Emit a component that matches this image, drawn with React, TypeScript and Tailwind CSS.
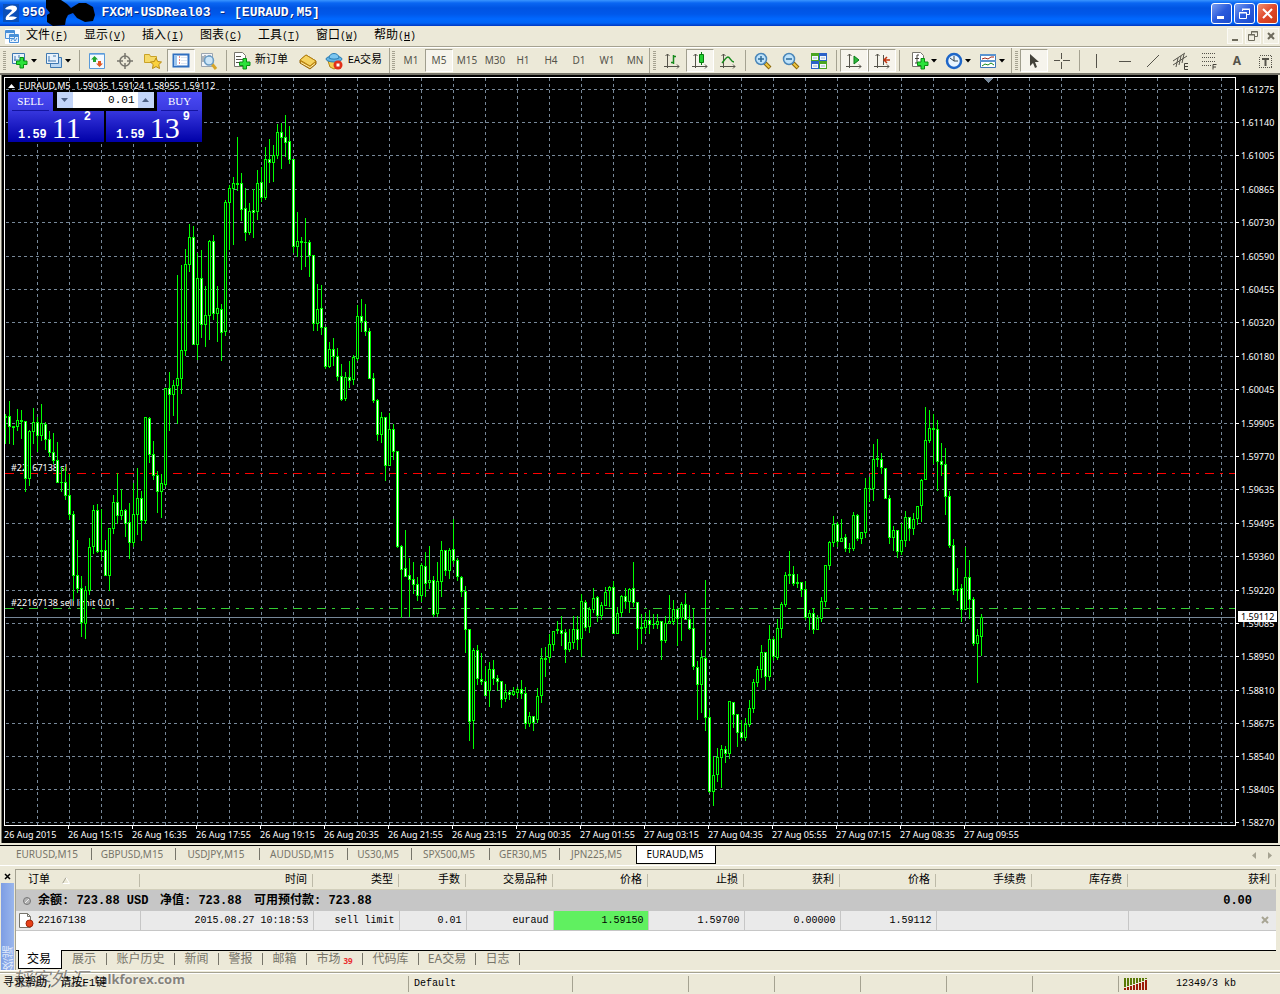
import type { ReactNode } from "react";

// high, body top, body bottom, low, falling
const candles = [
  [414, 416, 417, 443, 0], [401, 416, 426, 443, 1], [426, 426, 427, 444, 0], [409, 420, 426, 430, 0],
  [410, 420, 421, 438, 0], [421, 421, 478, 491, 1], [430, 431, 478, 485, 0], [408, 422, 431, 443, 0],
  [417, 422, 435, 451, 1], [404, 423, 435, 440, 0], [422, 424, 439, 449, 1], [431, 439, 452, 456, 1],
  [433, 452, 460, 463, 1], [442, 460, 482, 482, 1], [467, 482, 482, 491, 0], [467, 482, 495, 499, 1],
  [474, 495, 514, 519, 1], [511, 514, 575, 600, 1], [540, 575, 588, 592, 1], [576, 588, 622, 636, 1],
  [586, 590, 623, 638, 0], [538, 547, 590, 594, 0], [505, 510, 546, 553, 0], [504, 510, 551, 552, 1],
  [509, 550, 551, 559, 0], [540, 550, 575, 575, 1], [528, 528, 575, 590, 0], [495, 502, 528, 533, 0],
  [473, 502, 515, 523, 1], [489, 510, 515, 519, 0], [509, 510, 523, 536, 1], [503, 522, 542, 558, 1],
  [483, 514, 542, 546, 0], [468, 498, 514, 534, 0], [491, 498, 520, 540, 1], [417, 417, 520, 523, 0],
  [417, 418, 454, 462, 1], [441, 454, 475, 479, 1], [471, 475, 491, 512, 1], [474, 483, 491, 517, 0],
  [388, 388, 484, 486, 0], [372, 388, 394, 430, 1], [380, 385, 394, 415, 0], [275, 378, 385, 423, 0],
  [265, 350, 378, 393, 0], [249, 264, 350, 355, 0], [224, 237, 264, 271, 0], [226, 237, 344, 344, 1],
  [253, 278, 344, 359, 0], [250, 278, 324, 337, 1], [286, 315, 324, 346, 0], [240, 241, 315, 339, 0],
  [235, 241, 313, 319, 1], [286, 308, 313, 341, 0], [304, 309, 332, 360, 1], [200, 202, 331, 335, 0],
  [185, 188, 202, 249, 0], [177, 183, 188, 244, 0], [137, 183, 184, 190, 0], [173, 183, 209, 220, 1],
  [188, 208, 232, 240, 1], [203, 211, 232, 234, 0], [189, 210, 212, 237, 1], [170, 183, 211, 219, 0],
  [167, 182, 197, 201, 1], [147, 159, 197, 199, 0], [139, 159, 162, 182, 1], [145, 155, 162, 181, 0],
  [124, 132, 155, 158, 0], [123, 132, 137, 168, 1], [115, 137, 142, 156, 1], [126, 141, 159, 163, 1],
  [159, 159, 246, 252, 1], [212, 241, 246, 256, 0], [237, 241, 242, 269, 0], [218, 242, 242, 266, 0],
  [240, 242, 255, 276, 1], [255, 255, 323, 330, 1], [284, 309, 323, 330, 0], [285, 308, 327, 334, 1],
  [327, 327, 366, 368, 1], [342, 349, 366, 367, 0], [338, 349, 356, 365, 1], [348, 356, 376, 380, 1],
  [364, 376, 399, 400, 1], [372, 377, 398, 400, 0], [361, 377, 380, 387, 1], [355, 357, 379, 384, 0],
  [305, 316, 358, 360, 0], [299, 316, 321, 331, 1], [304, 321, 331, 335, 1], [328, 331, 378, 378, 1],
  [373, 378, 400, 402, 1], [399, 400, 434, 440, 1], [412, 417, 434, 442, 0], [417, 417, 465, 480, 1],
  [413, 429, 465, 465, 0], [424, 429, 451, 459, 1], [451, 451, 546, 547, 1], [545, 546, 569, 617, 1],
  [530, 568, 576, 576, 1], [558, 575, 579, 616, 1], [562, 579, 584, 593, 1], [577, 584, 595, 600, 1],
  [563, 565, 595, 601, 0], [552, 566, 583, 596, 1], [546, 580, 582, 588, 0], [576, 580, 614, 616, 1],
  [562, 581, 613, 616, 0], [541, 550, 581, 596, 0], [550, 550, 570, 575, 1], [548, 550, 570, 578, 0],
  [519, 549, 560, 563, 1], [558, 560, 576, 580, 1], [576, 577, 591, 596, 1], [586, 591, 629, 652, 1],
  [629, 629, 721, 740, 1], [648, 650, 720, 748, 0], [645, 650, 678, 684, 1], [653, 679, 681, 684, 1],
  [666, 681, 695, 695, 1], [662, 669, 690, 706, 0], [660, 669, 678, 684, 1], [675, 678, 681, 690, 1],
  [681, 681, 699, 707, 1], [684, 692, 698, 701, 0], [690, 692, 694, 699, 1], [687, 691, 694, 695, 0],
  [687, 689, 692, 697, 0], [680, 689, 693, 698, 1], [687, 693, 723, 728, 1], [712, 716, 723, 726, 0],
  [716, 716, 722, 730, 1], [688, 696, 719, 722, 0], [648, 658, 695, 702, 0], [647, 658, 659, 676, 0],
  [634, 644, 657, 662, 0], [631, 631, 644, 650, 0], [621, 629, 630, 633, 0], [616, 630, 633, 645, 1],
  [629, 632, 649, 662, 1], [629, 642, 649, 651, 0], [616, 629, 642, 648, 0], [616, 629, 639, 649, 1],
  [594, 601, 638, 656, 0], [600, 602, 627, 630, 1], [607, 609, 626, 632, 0], [588, 598, 609, 612, 0],
  [596, 597, 615, 621, 1], [602, 605, 615, 619, 0], [587, 592, 605, 605, 0], [586, 587, 590, 606, 0],
  [581, 587, 633, 633, 1], [607, 613, 633, 633, 0], [595, 596, 612, 616, 0], [588, 596, 601, 608, 1],
  [588, 589, 601, 612, 0], [562, 588, 602, 606, 1], [602, 602, 628, 649, 1], [614, 627, 628, 643, 0],
  [613, 620, 627, 633, 0], [610, 620, 624, 633, 1], [614, 624, 624, 628, 0], [614, 621, 624, 628, 0],
  [621, 621, 640, 659, 1], [616, 623, 640, 642, 0], [595, 621, 623, 623, 0], [600, 609, 621, 624, 0],
  [609, 609, 618, 645, 1], [602, 604, 617, 640, 0], [593, 604, 619, 619, 1], [605, 619, 628, 629, 1],
  [609, 628, 666, 669, 1], [661, 667, 684, 719, 1], [650, 657, 684, 712, 0], [580, 658, 717, 730, 1],
  [710, 717, 791, 792, 1], [756, 775, 791, 805, 0], [748, 757, 774, 781, 0], [745, 749, 757, 787, 0],
  [746, 749, 753, 762, 1], [701, 701, 753, 758, 0], [702, 702, 714, 727, 1], [714, 714, 732, 746, 1],
  [720, 732, 737, 738, 1], [718, 724, 737, 740, 0], [700, 708, 724, 726, 0], [679, 682, 708, 712, 0],
  [666, 669, 682, 686, 0], [645, 652, 669, 677, 0], [652, 652, 676, 689, 1], [625, 639, 676, 680, 0],
  [637, 639, 656, 660, 1], [619, 628, 657, 659, 0], [602, 604, 628, 637, 0], [572, 575, 604, 606, 0],
  [551, 574, 575, 583, 0], [566, 574, 583, 585, 1], [574, 582, 583, 587, 0], [582, 582, 589, 596, 1],
  [581, 589, 617, 619, 1], [610, 613, 617, 629, 0], [608, 613, 629, 633, 1], [615, 618, 629, 629, 0],
  [597, 601, 618, 621, 0], [565, 565, 601, 606, 0], [541, 542, 565, 569, 0], [516, 524, 542, 546, 0],
  [522, 524, 541, 546, 1], [519, 538, 541, 541, 0], [534, 537, 548, 551, 1], [543, 548, 548, 552, 0],
  [512, 515, 548, 550, 0], [514, 515, 538, 540, 1], [532, 532, 538, 543, 0], [478, 488, 532, 537, 0],
  [477, 488, 488, 501, 0], [444, 459, 488, 500, 0], [439, 458, 459, 466, 0], [453, 459, 467, 473, 1],
  [468, 468, 498, 498, 1], [495, 498, 537, 543, 1], [526, 530, 537, 550, 0], [530, 530, 551, 557, 1],
  [523, 540, 551, 554, 0], [511, 517, 540, 546, 0], [517, 517, 528, 540, 1], [513, 519, 528, 534, 0],
  [506, 506, 518, 524, 0], [479, 480, 505, 521, 0], [407, 440, 479, 479, 0], [410, 428, 440, 442, 0],
  [414, 428, 429, 463, 0], [420, 429, 461, 490, 1], [443, 461, 464, 475, 1], [448, 464, 496, 514, 1],
  [491, 496, 545, 547, 1], [539, 545, 590, 594, 1], [568, 589, 590, 600, 0], [584, 588, 609, 621, 1],
  [547, 577, 609, 609, 0], [560, 577, 599, 618, 1], [597, 599, 643, 645, 1], [629, 635, 643, 682, 0],
  [614, 617, 636, 655, 0],
];

const prices: [number, string][] = [
  [89, "1.61275"], [122, "1.61140"], [155, "1.61005"], [189, "1.60865"], [222, "1.60730"], [256, "1.60590"],
  [289, "1.60455"], [322, "1.60320"], [356, "1.60180"], [389, "1.60045"], [423, "1.59905"], [456, "1.59770"],
  [489, "1.59635"], [523, "1.59495"], [556, "1.59360"], [590, "1.59220"], [623, "1.59085"], [656, "1.58950"],
  [690, "1.58810"], [723, "1.58675"], [756, "1.58540"], [789, "1.58405"], [822, "1.58270"],
];

const times = [
  "26 Aug 2015", "26 Aug 15:15", "26 Aug 16:35", "26 Aug 17:55", "26 Aug 19:15", "26 Aug 20:35", "26 Aug 21:55", "26 Aug 23:15",
  "27 Aug 00:35", "27 Aug 01:55", "27 Aug 03:15", "27 Aug 04:35", "27 Aug 05:55", "27 Aug 07:15", "27 Aug 08:35", "27 Aug 09:55",
];

const menus = [["文件", "F"], ["显示", "V"], ["插入", "I"], ["图表", "C"], ["工具", "T"], ["窗口", "W"], ["帮助", "H"]];

const periods = ["M1", "M5", "M15", "M30", "H1", "H4", "D1", "W1", "MN"];

const symbols = [
  ["EURUSD,M15", "w-[86px]"], ["GBPUSD,M15", "w-[84px]"], ["USDJPY,M15", "w-[84px]"], ["AUDUSD,M15", "w-[88px]"],
  ["US30,M5", "w-16"], ["SPX500,M5", "w-[78px]"], ["GER30,M5", "w-[70px]"], ["JPN225,M5", "w-[76px]"],
];

const columns = [
  ["时间", "w-[173px]"], ["类型", "w-[86px]"], ["手数", "w-[67px]"], ["交易品种", "w-[87px]"], ["价格", "w-[95px]"],
  ["止损", "w-[96px]"], ["获利", "w-[96px]"], ["价格", "w-[96px]"], ["手续费", "w-[96px]"], ["库存费", "w-[96px]"],
];

const panels = [
  ["展示", "w-[45px]"], ["账户历史", "w-[68px]"], ["新闻", "w-[44px]"], ["警报", "w-[44px]"], ["邮箱", "w-[44px]"],
  ["市场", "w-[56px]"], ["代码库", "w-[56px]"], ["EA交易", "w-[57px]"], ["日志", "w-[44px]"],
];

function Icon({ w = 18, h = 18, children }: { w?: number; h?: number; children: ReactNode }) {
  return (
    <svg width={w} height={h} viewBox={`0 0 ${w} ${h}`} className="block shrink-0" fill="none">
      {children}
    </svg>
  );
}

function Plus({ x, y }: { x: number; y: number }) {
  return (
    <path
      transform={`translate(${x} ${y})`}
      d="M4 .5h3.500v3.500h3.500v3.500h-3.500v3.500h-3.500v-3.500h-3.500v-3.500h3.500z"
      fill="#2be23a"
      stroke="#0a8f12"
    />
  );
}

function Tool({ label, pressed, children }: { label: string; pressed?: boolean; children: ReactNode }) {
  return (
    <button
      aria-label={label}
      className={`flex h-[23px] w-7 shrink-0 items-center justify-center ${
        pressed ? "border border-t-[#a09e8e] border-l-[#a09e8e] border-r-white border-b-white bg-[#f6f4ec]" : ""
      }`}
    >
      {children}
    </button>
  );
}

function DropTool({ label, children }: { label: string; children: ReactNode }) {
  return (
    <button aria-label={label} className="flex h-[23px] w-[34px] shrink-0 items-center gap-[2px] pl-[3px]">
      {children}
      <Icon w={6} h={4}>
        <path d="M0 0h6l-3 3.500z" fill="#000" />
      </Icon>
    </button>
  );
}

function Grip() {
  return <div className="mx-[2px] h-[19px] w-[3px] shrink-0 bg-[repeating-linear-gradient(#a5a291_0_1px,#ece9d8_1px_2px)]" />;
}

function Sep() {
  return <div className="mx-[3px] h-[21px] w-px shrink-0 bg-[#a5a291]" />;
}

function Magnifier({ plus }: { plus?: boolean }) {
  return (
    <Icon>
      <path d="M11 11l5 5" stroke="#8a6508" strokeWidth="4" />
      <path d="M11.500 11.500l4 4" stroke="#f0c840" strokeWidth="2" />
      <circle cx="7" cy="7" r="5.500" fill="#bfe3fa" stroke="#4a86b8" strokeWidth="1.500" />
      <path d="M4 7h6" stroke="#2c6a98" strokeWidth="1.500" />
      {plus && <path d="M7 4v6" stroke="#2c6a98" strokeWidth="1.500" />}
    </Icon>
  );
}

function TitleBar() {
  return (
    <header className="flex h-[26px] items-center bg-[linear-gradient(#3a95ff_0,#0a66f2_3px,#0054e3_8px,#0058ea_14px,#0068ff_19px,#0064f6_23px,#0036c0_26px)] pl-[3px] pr-[2px]">
      <Icon w={16} h={20}>
        <path d="M0 1h16v18H0z" fill="#0b4fb8" />
        <path d="M2 6c2-4 11-5 12-1 .5 4-7 6-8 9 3-1 6 0 8 0-2 4-8 3-11 3-2-4 5-7 6-10-2-1-4 0-7-1z" fill="#fff" />
      </Icon>
      <h1 className="flex items-center font-['Liberation_Mono'] text-[13px] font-bold whitespace-pre text-white [text-shadow:1px_1px_#0a2a80]">
        <span className="ml-[3px]">950</span>
        <Icon w={50} h={26}>
          <path d="M1 0h15l6 4 4 4 8-5h7l7 4 2 8-2 6-8 1-8-4-4-5-5 2-2 4-1 6-12 1-6-4V15l3-2-4-5z" fill="#000" />
        </Icon>
        <span className="ml-[6px]">FXCM-USDReal03 - [EURAUD,M5]</span>
      </h1>
      <div className="ml-auto flex gap-[2px]">
        <button aria-label="最小化" className="flex size-[21px] items-center justify-center rounded-[3px] border border-white bg-[linear-gradient(135deg,#7b9ef0,#2a5bdc_50%,#1b4ccc)]">
          <Icon w={13} h={13}><path d="M2 9h7v3H2z" fill="#fff" /></Icon>
        </button>
        <button aria-label="还原" className="flex size-[21px] items-center justify-center rounded-[3px] border border-white bg-[linear-gradient(135deg,#7b9ef0,#2a5bdc_50%,#1b4ccc)]">
          <Icon w={13} h={13}>
            <path d="M4.500 4V2.500h7v5H9M4 2h8M1.500 5.500h7v6h-7zM1 6h8" stroke="#fff" />
          </Icon>
        </button>
        <button aria-label="关闭" className="flex size-[21px] items-center justify-center rounded-[3px] border border-white bg-[linear-gradient(135deg,#f09070,#e0482a_50%,#c83a18)]">
          <Icon w={13} h={13}><path d="M2 2l9 9M11 2l-9 9" stroke="#fff" strokeWidth="2" /></Icon>
        </button>
      </div>
    </header>
  );
}

function MenuBar() {
  return (
    <div className="flex h-5 items-center pl-[5px] pr-px">
      <Icon w={15} h={15}>
        <path d="M0 0h15v15H0z" fill="#fff" />
        <path d="M.5 1.500h9v8h-9zM4.500 5.500h9v8h-9z" fill="#e8f2fc" stroke="#4a90d8" />
        <path d="M1 3h8M5 7h8" stroke="#4a90d8" strokeWidth="2" />
        <path d="M6 12l2-3 2 3 2-3" stroke="#4a90d8" />
      </Icon>
      <nav className="ml-[6px] flex">
        {menus.map(([name, key]) => (
          <button key={key} className="flex w-[58px] items-center font-['Liberation_Mono','Noto_Sans_CJK_SC',monospace] text-[12px]">
            {name}
            <span className="text-[10px]">
              (<u>{key}</u>)
            </span>
          </button>
        ))}
      </nav>
      <div className="ml-auto flex gap-[2px]">
        <button aria-label="最小化图表" className="flex size-4 items-center justify-center border border-[#fbfaf5] bg-[#f1efe3]">
          <Icon w={12} h={12}><path d="M3 9h6v2H3z" fill="#6d6a5c" /></Icon>
        </button>
        <button aria-label="还原图表" className="flex size-4 items-center justify-center border border-[#fbfaf5] bg-[#f1efe3]">
          <Icon w={12} h={12}><path d="M4.500 4V1.500h6v5H8M4 2h7M1.500 4.500h6v6h-6zM1 5h7" stroke="#6d6a5c" /></Icon>
        </button>
        <button aria-label="关闭图表" className="flex size-4 items-center justify-center border border-[#fbfaf5] bg-[#f1efe3]">
          <Icon w={12} h={12}><path d="M3 3l6 6M9 3l-6 6" stroke="#6d6a5c" strokeWidth="2" /></Icon>
        </button>
      </div>
    </div>
  );
}

function Toolbar() {
  const axis = <path d="M4.500 2v14M1 14.500h15M2.500 4l2-2 2 2M14 12.500l2 2-2 2" stroke="#55534a" />;
  return (
    <div className="flex h-[27px] items-center border-t border-[#a5a291] pt-px font-['Liberation_Mono','Noto_Sans_CJK_SC',monospace] text-[11px] shadow-[inset_0_1px_#fff]">
      <div className="flex h-full w-[390px] shrink-0 items-center border-r border-[#a5a291] pl-px">
        <Grip />
        <DropTool label="新图表">
          <Icon>
            <path d="M1.500 1.500h12v10h-12z" fill="#e8f2fc" stroke="#3f78b0" />
            <path d="M4 4v5M3 8h8M8 3v3" stroke="#3f78b0" />
            <Plus x={5} y={5} />
          </Icon>
        </DropTool>
        <DropTool label="配置文件">
          <Icon>
            <path d="M5.500 5.500h11v10h-11z" fill="#b9d7f2" stroke="#3f78b0" />
            <path d="M1.500 1.500h12v10h-12z" fill="#e8f2fc" stroke="#3f78b0" />
            <path d="M4 4v5M3 9h8M8 4h3" stroke="#3f78b0" />
          </Icon>
        </DropTool>
        <Sep />
        <Tool label="市场报价">
          <Icon>
            <path d="M1.500 1.500h15v15h-15z" fill="#f4f9ff" stroke="#5a9ad8" />
            <path d="M2 2h14v1H2z" fill="#8fbcea" />
            <path d="M6.500 4l3.500 3.500H8V10H5V7.500H3z" fill="#1fa52c" />
            <path d="M11.500 15L8 11.500h2V9h3v2.500h2z" fill="#e25822" />
          </Icon>
        </Tool>
        <Tool label="数据窗口">
          <Icon>
            <circle cx="9" cy="9" r="5" stroke="#77756c" strokeWidth="1.500" />
            <path d="M9 1v6M9 11v6M1 9h6M11 9h6" stroke="#77756c" strokeWidth="1.500" />
          </Icon>
        </Tool>
        <Tool label="导航">
          <Icon>
            <path d="M.5 2.500h5l1 2h6v6h-12z" fill="#f6da68" stroke="#c9a227" />
            <path d="M12 6l1.700 3.500 3.800.5-2.700 2.600.7 3.900-3.500-1.900-3.500 1.900.7-3.900L6.500 10l3.800-.5z" fill="#fbd23c" stroke="#b98a10" />
          </Icon>
        </Tool>
        <Tool label="终端" pressed>
          <Icon>
            <path d="M1.500 2.500h15v12h-15z" fill="#fff" stroke="#2f6fc0" strokeWidth="2" />
            <path d="M2 3h3v11H2z" fill="#9cc4ee" />
            <path d="M7 5h1M7 8h1M7 11h1" stroke="#d02020" />
            <path d="M9 5.500h6M9 8.500h6M9 11.500h6" stroke="#dde6f2" />
          </Icon>
        </Tool>
        <Tool label="策略测试">
          <Icon>
            <path d="M1.500 1.500h11v13h-11z" fill="#f1f4f8" stroke="#9aa5b0" />
            <path d="M3 4v6M5 3v5M8 4h3" stroke="#66727c" />
            <path d="M12 12l4 5" stroke="#d6a528" strokeWidth="3" />
            <circle cx="9" cy="8.500" r="4.500" fill="#c4e2f8" fillOpacity=".85" stroke="#6a9cc4" strokeWidth="1.500" />
          </Icon>
        </Tool>
        <Sep />
        <button className="flex h-[23px] w-16 shrink-0 items-center gap-[4px] pl-[3px] whitespace-nowrap">
          <Icon>
            <path d="M1.500.5h8l3 3v11h-11z" fill="#fff" stroke="#77756c" />
            <path d="M3 4.500h5M3 7.500h7M3 10.500h4" stroke="#55534a" />
            <Plus x={6} y={6} />
          </Icon>
          新订单
        </button>
        <Tool label="语言编辑器">
          <Icon>
            <path d="M1 8l6-5 10 6v3l-6 5L1 11z" fill="#c98e18" stroke="#99690c" />
            <path d="M1 8l6-5 10 6-6 5z" fill="#f6d360" stroke="#b58212" />
            <path d="M2 10.500l9 5 5-4" stroke="#fff1b0" />
          </Icon>
        </Tool>
        <button className="flex h-[23px] shrink-0 items-center gap-[5px] pl-[3px] whitespace-nowrap">
          <Icon>
            <path d="M3 9h12l-2 6-4 2-4-2z" fill="#f4cf50" stroke="#b38616" />
            <ellipse cx="9" cy="7" rx="8" ry="3" fill="#62b4e4" stroke="#2b7db4" />
            <path d="M4 6c0-6 10-6 10 0-2 1.500-8 1.500-10 0z" fill="#7cc6f0" stroke="#2b7db4" />
            <circle cx="13" cy="13" r="4.500" fill="#e23018" />
            <path d="M11.500 11.500h3v3h-3z" fill="#fff" />
          </Icon>
          <span><span className="text-[10px]">EA</span>交易</span>
        </button>
      </div>
      <div className="flex h-full w-[260px] shrink-0 items-center border-r border-[#a5a291] font-['Noto_Sans'] text-[10px] text-[#55534a]">
        <Grip />
        {periods.map((p) => (
          <Tool key={p} label={p} pressed={p === "M5"}>{p}</Tool>
        ))}
      </div>
      <div className="flex h-full w-[362px] shrink-0 items-center border-r border-[#a5a291] pl-px">
        <Grip />
        <Tool label="柱状图"><Icon>{axis}<path d="M10.500 3v9M8 10.500h3M10 4.500h3" stroke="#168a1c" strokeWidth="1.500" /></Icon></Tool>
        <Tool label="蜡烛图" pressed><Icon>{axis}<path d="M10.500 0v13" stroke="#087c10" /><path d="M8.500 2.500h4v8h-4z" fill="#22d032" stroke="#087c10" /></Icon></Tool>
        <Tool label="折线图"><Icon>{axis}<path d="M3 11c2-2 4-6 6-6s3 5 6 5" stroke="#168a1c" strokeWidth="1.500" /></Icon></Tool>
        <Sep />
        <Tool label="放大"><Magnifier plus /></Tool>
        <Tool label="缩小"><Magnifier /></Tool>
        <Tool label="平铺窗口">
          <Icon>
            <path d="M1 1h8v8H1zM9 9h8v8H9z" fill="#49a522" />
            <path d="M9 1h8v8H9zM1 9h8v8H1z" fill="#2c62c8" />
            <path d="M2 4h6v4H2zM10 4h6v4h-6zM2 12h6v4H2zM10 12h6v4h-6z" fill="#f4f8fc" />
            <path d="M3 6h4M11 6h4M3 14h4M11 14h4" stroke="#9cb4cc" />
          </Icon>
        </Tool>
        <Sep />
        <Tool label="自动滚动" pressed><Icon>{axis}<path d="M9 4v8l5-4z" fill="#2bb83a" stroke="#0a7a16" /></Icon></Tool>
        <Tool label="图表平移" pressed><Icon>{axis}<path d="M10.500 3v10" stroke="#55534a" /><path d="M17 8h-5M14 5l-3 3 3 3" stroke="#c03410" strokeWidth="1.500" /></Icon></Tool>
        <Sep />
        <div className="ml-[5px] flex">
          <DropTool label="技术指标">
            <Icon>
              <path d="M1.500.5h8l3 3v11h-11z" fill="#fff" stroke="#77756c" />
              <path d="M8 3H6v8H4M4 6.500h4" stroke="#44423a" />
              <Plus x={6} y={6} />
            </Icon>
          </DropTool>
          <DropTool label="周期">
            <Icon>
              <circle cx="9" cy="9" r="7" fill="#e8f4fe" stroke="#1e66c8" strokeWidth="2.500" />
              <path d="M9 4v5h4M5 6l4 3" stroke="#33424e" />
            </Icon>
          </DropTool>
          <DropTool label="模板">
            <Icon>
              <path d="M1.500 2.500h15v13h-15z" fill="#fff" stroke="#3f78b8" />
              <path d="M1 3h16M1 9h16" stroke="#5a94d0" strokeWidth="2" />
              <path d="M3 7l3-1 3 1 3-2 3 0" stroke="#a02818" />
              <path d="M3 14l3-2 3 1 3-2 3 2" stroke="#168a1c" />
            </Icon>
          </DropTool>
        </div>
      </div>
      <div className="flex h-full flex-1 items-center pl-px text-[#55534a]">
        <Grip />
        <Tool label="光标" pressed><Icon><path d="M5 2v12l3-3 2 5 2-1-2-5h4z" fill="#44423a" /></Icon></Tool>
        <Tool label="十字线"><Icon><path d="M8.500 1v6M8.500 10v7M1 8.500h6M10 8.500h7" stroke="#55534a" /></Icon></Tool>
        <Sep />
        <Tool label="垂直线"><Icon><path d="M8.500 2v14" stroke="#55534a" /></Icon></Tool>
        <Tool label="水平线"><Icon><path d="M3 9.500h12" stroke="#55534a" /></Icon></Tool>
        <Tool label="趋势线"><Icon><path d="M3 15L15 3" stroke="#55534a" /></Icon></Tool>
        <Tool label="通道">
          <Icon>
            <path d="M1 13L15 4M1 9L13 1M4 15l2-9M7 13l2-9M10 11l2-9" stroke="#55534a" />
            <path d="M16 11.500h-3.500v6H16M13 14.500h3" stroke="#44423a" />
          </Icon>
        </Tool>
        <Tool label="斐波纳契">
          <Icon>
            <path d="M2 1.500h14M2 5.500h14M2 9.500h14M2 13.500h9" stroke="#55534a" strokeDasharray="1 1" />
            <path d="M16.500 12.500h-3.500v5M13 15h3" stroke="#44423a" />
          </Icon>
        </Tool>
        <Tool label="文字"><span className="font-['Noto_Sans'] text-[12px] font-bold">A</span></Tool>
        <Tool label="文字标签">
          <Icon>
            <path d="M3.500 3.500h12v12h-12z" stroke="#55534a" strokeDasharray="1 1" shapeRendering="crispEdges" />
            <path d="M6 7h7M9.500 7v7" stroke="#55534a" strokeWidth="2" />
          </Icon>
        </Tool>
      </div>
    </div>
  );
}

function Plot() {
  return (
    <svg className="block h-full w-full" shapeRendering="crispEdges">
      {/* drawn in window coordinates, shifted into the plot */}
      <svg x="-5" y="-78" width="3000" height="1000" overflow="visible">
        {Array.from({ length: 80 }, (_, i) => (
          <path key={i} d={`M${37.5 + i * 32} 78v747`} stroke="#778899" strokeDasharray="3 3" />
        ))}
        {prices.map(([y]) => (
          <path key={y} d={`M6 ${y + 0.5}h2900`} stroke="#778899" strokeDasharray="3 3" />
        ))}
        <path d="M5 473.500h2900" stroke="#ff0000" strokeDasharray="9 6 3 6" />
        <path d="M5 608.500h2900" stroke="#32cd32" strokeDasharray="9 6 3 6" />
        <path d="M5 617.500h2900" stroke="#778899" />
        <path d="M983 78h10l-5 5z" fill="#778899" />
        <g className="fill-white font-['Noto_Sans'] text-[9px]">
          <text x="11" y="471">#22167138 sl</text>
          <text x="11" y="606">#22167138 sell limit 0.01</text>
        </g>
        {candles.map(([high, top, bottom, low, falling], i) => {
          const x = 5 + i * 4;
          const h = bottom - top + 1;
          return (
            <g key={i}>
              <rect x={x} y={high} width="1" height={low - high + 1} fill="#00ff00" />
              <rect x={x - 1} y={top} width="3" height={h} fill="#00ff00" />
              {h > 2 && <rect x={x} y={top + 1} width="1" height={h - 2} fill={falling ? "#ffffff" : "#000000"} />}
            </g>
          );
        })}
      </svg>
    </svg>
  );
}

function Quote({ side, big, sup }: { side: string; big: string; sup: string }) {
  return (
    <button aria-label={side} className="flex h-[31px] w-[96px] items-end bg-[linear-gradient(#3636dd,#0000a8)] pb-px pl-[10px] font-['Liberation_Mono'] text-white">
      <span className="text-[12px] leading-[12px] font-bold">1.59</span>
      <span className="ml-[5px] font-['Liberation_Serif'] text-[30px] leading-[26px]">{big}</span>
      <span className="ml-[3px] self-start text-[12px] leading-[12px] font-bold">{sup}</span>
    </button>
  );
}

function OneClick() {
  return (
    <div className="absolute top-[2px] left-[3px]">
      <div className="flex h-3 items-center gap-[4px] font-['Noto_Sans'] text-[9px] whitespace-pre text-white">
        <Icon w={7} h={4}><path d="M0 4h7L3.500 0z" fill="#fff" /></Icon>
        <span>EURAUD,M5  1.59035 1.59124 1.58955 1.59112</span>
      </div>
      <div className="w-[194px] bg-black">
        <div className="flex h-[19px] justify-between font-['Liberation_Serif'] text-[11px] leading-[17px] text-white">
          <button className="w-[45px] bg-[linear-gradient(#4b4bf5,#3a3ae0)] px-1"><span className="block border-b border-[#1414a0]">SELL</span></button>
          <div className="flex h-4 w-[97px]">
            <button aria-label="减少" className="flex w-4 items-center justify-center bg-[#c3d5f8]"><Icon w={7} h={4}><path d="M0 0h7L3.500 4z" fill="#4d6185" /></Icon></button>
            <input aria-label="手数" defaultValue="0.01" className="w-[65px] bg-white pr-[3px] text-right font-['Liberation_Mono'] text-[11px] text-black" />
            <button aria-label="增加" className="flex w-4 items-center justify-center bg-[#c3d5f8]"><Icon w={7} h={4}><path d="M0 4h7L3.500 0z" fill="#4d6185" /></Icon></button>
          </div>
          <button className="w-[45px] bg-[linear-gradient(#4b4bf5,#3a3ae0)] px-1"><span className="block border-b border-[#1414a0]">BUY</span></button>
        </div>
        <div className="flex justify-between">
          <Quote side="SELL" big="11" sup="2" />
          <Quote side="BUY" big="13" sup="9" />
        </div>
      </div>
    </div>
  );
}

function Chart() {
  return (
    <main className="border-t-2 border-[#77756a] pr-[2px] pl-px">
      <div className="border-l border-[#77756a] bg-black pt-[2px] pl-[2px] font-['Noto_Sans'] text-[9px] text-white">
        <div className="flex h-[749px]">
          <div className="relative min-w-0 flex-1 overflow-hidden border border-white">
            <Plot />
            <OneClick />
          </div>
          <svg className="block w-[42px] shrink-0 overflow-visible" shapeRendering="crispEdges" fill="#fff">
            {prices.map(([y, text]) => (
              <g key={y}>
                <rect y={y - 77} width="3" height="1" />
                <text x="5" y={y - 73}>{text}</text>
              </g>
            ))}
            <rect x="2" y="534" width="39" height="11" />
            <text x="5" y="543" fill="#000">1.59112</text>
          </svg>
        </div>
        <div className="flex h-[17px] overflow-hidden">
          {times.map((t, i) => (
            <div key={t} className={`h-[3px] w-16 shrink-0 leading-[17px] whitespace-nowrap ${i ? "border-l border-white" : ""}`}>
              <span className={i ? "-ml-[1px]" : ""}>{t}</span>
            </div>
          ))}
        </div>
      </div>
    </main>
  );
}

function ChartTabs() {
  return (
    <div className="mt-[2px] flex h-[21px] items-start border-t border-b border-t-black border-b-white pl-[6px] font-['Noto_Sans'] text-[10px] text-[#77756a]">
      {symbols.map(([s, w]) => (
        <button key={s} className={`mt-[2px] h-3 border-[#77756a] pr-[3px] leading-[12px] ${w} ${s === "JPN225,M5" ? "" : "border-r"}`}>
          {s}
        </button>
      ))}
      <button className="-mt-px h-[19px] w-20 border border-black bg-white pr-[2px] leading-[17px] text-black">EURAUD,M5</button>
      <div className="mt-[6px] mr-2 ml-auto flex gap-3">
        <button aria-label="向左"><Icon w={4} h={7}><path d="M4 0v7L0 3.500z" fill="#a5a291" /></Icon></button>
        <button aria-label="向右"><Icon w={4} h={7}><path d="M0 0v7l4-3.500z" fill="#a5a291" /></Icon></button>
      </div>
    </div>
  );
}

function Orders() {
  const cell = "border-r border-[#c6c6c6] pr-1 text-right";
  return (
    <table className="w-full table-fixed border-collapse bg-white text-[10px]">
      <thead>
        <tr className="h-5 bg-[#ece9d8] text-[11px] leading-[17px] shadow-[inset_0_-1px_#d2cfbb]">
          <th className="w-[124px] py-0 pl-3 text-left font-normal">
            <span className="flex h-[13px] items-center gap-3 border-r border-[#bdbaa8]">
              订单
              <Icon w={8} h={7}><path d="M.5 6.500L4 .5" stroke="#a5a291" /><path d="M4 .5l3.500 6h-7" stroke="#fff" /></Icon>
            </span>
          </th>
          {columns.map(([name, w], i) => (
            <th key={i} className={`p-0 text-right font-normal ${w}`}>
              <span className="block h-[13px] border-r border-[#bdbaa8] pr-[5px] leading-[13px]">{name}</span>
            </th>
          ))}
          <th className="p-0 text-right font-normal">
            <span className="block h-[13px] border-r border-[#bdbaa8] pr-[5px] leading-[13px]">获利</span>
          </th>
        </tr>
      </thead>
      <tbody>
        <tr className="h-[21px] bg-[#c6c6c6] text-[12px] leading-[16px] font-bold">
          <td colSpan={11} className="p-0">
            <div className="flex items-center pl-[7px] whitespace-nowrap">
              <Icon w={8} h={8}><circle cx="4" cy="4" r="3.500" fill="#b4b4b4" stroke="#777" /><path d="M2 6l4-4" stroke="#eee" /></Icon>
              <span className="ml-[7px] w-[122px]">余额: 723.88 USD</span>
              <span className="w-[94px]">净值: 723.88</span>
              <span>可用预付款: 723.88</span>
            </div>
          </td>
          <td className="p-0 pr-6 text-right">0.00</td>
        </tr>
        <tr className="h-[19px] border-b border-[#c6c6c6] bg-[#eaeaea]">
          <td className="border-r border-[#c6c6c6] p-0">
            <div className="flex items-center gap-[4px] pl-[3px]">
              <Icon w={15} h={15}>
                <path d="M.5.5h8l3 3v11H.5z" fill="#fff" stroke="#77756c" />
                <path d="M8.500.5v3h3" stroke="#77756c" />
                <circle cx="10.500" cy="10.500" r="3.500" fill="#e84018" stroke="#a02408" />
              </Icon>
              22167138
            </div>
          </td>
          <td className={cell}>2015.08.27 10:18:53</td>
          <td className={cell}>sell limit</td>
          <td className={cell}>0.01</td>
          <td className={cell}>euraud</td>
          <td className={`bg-[#60f060] ${cell}`}>1.59150</td>
          <td className={cell}>1.59700</td>
          <td className={cell}>0.00000</td>
          <td className={cell}>1.59112</td>
          <td />
          <td className="border-r border-[#c6c6c6]" />
          <td className="p-0 pr-[7px]">
            <button aria-label="关闭订单" className="ml-auto block"><Icon w={8} h={8}><path d="M1 1l6 6M7 1L1 7" stroke="#a8a594" strokeWidth="2" /></Icon></button>
          </td>
        </tr>
      </tbody>
    </table>
  );
}

function Terminal() {
  return (
    <section className="mt-[3px] flex border-b border-white pr-1">
      <div className="flex w-[15px] shrink-0 flex-col px-px">
        <button aria-label="关闭终端" className="flex h-[14px] items-center justify-center">
          <Icon w={7} h={7}><path d="M1 1l5 5M6 1L1 6" stroke="#000" strokeWidth="1.500" /></Icon>
        </button>
        <div className="flex-1 rotate-180 bg-[linear-gradient(to_left,#7d9de4,#9ab6ec)] text-left font-['Noto_Sans_CJK_SC',sans-serif] text-[12px] leading-[13px] text-[#dfe8fb] [writing-mode:vertical-rl]">终端</div>
      </div>
      <div className="min-w-0 flex-1 border-t border-l border-[#a5a291]">
        <div className="h-20 bg-white">
          <Orders />
        </div>
        <div className="flex h-5 items-start border-t border-black font-['Noto_Sans','Noto_Sans_CJK_SC',sans-serif] text-[12px] text-[#77756a]">
          <button className="-mt-px ml-[2px] h-[19px] w-11 border border-t-0 border-black bg-white pr-[2px] leading-[16px] text-black">交易</button>
          {panels.map(([p, w]) => (
            <button key={p} className={`mt-[2px] flex h-3 items-center justify-center gap-[3px] border-r border-[#77756a] leading-[12px] whitespace-nowrap ${w}`}>
              {p}
              {p === "市场" && <span className="pt-1 text-[8px] font-bold text-[#e83030]">39</span>}
            </button>
          ))}
        </div>
      </div>
    </section>
  );
}

function StatusBar() {
  return (
    <footer className="relative mt-px flex h-[22px] items-center border-t border-[#a5a291] text-[10px] shadow-[inset_0_1px_#fff]">
      <p className="relative z-10 w-[408px] pl-[3px] text-[11px] whitespace-nowrap">寻求帮助, 请按F1键</p>
      <p className="h-4 w-[164px] border-l border-[#a5a291] pl-[5px] leading-4">Default</p>
      <div className="h-4 w-[116px] border-l border-[#a5a291]" />
      <div className="h-4 w-[86px] border-l border-[#a5a291]" />
      <div className="h-4 w-[86px] border-l border-[#a5a291]" />
      <div className="h-4 w-[86px] border-l border-[#a5a291]" />
      <div className="h-4 w-[86px] border-l border-[#a5a291]" />
      <div className="h-4 w-[86px] border-l border-[#a5a291]" />
      <div className="flex h-4 flex-1 items-center border-l border-[#a5a291] pl-[5px]">
        <Icon w={24} h={12}>
          {[2, 3, 4, 5, 6, 7, 8, 10].map((h, i) => (
            <g key={i} shapeRendering="crispEdges">
              <path d={`M${i * 3} 0h2v${11 - h}h-2z`} fill="#5a7a08" />
              <path d={`M${i * 3} ${12 - h}h2v${h}h-2z`} fill="#9c1c08" />
            </g>
          ))}
        </Icon>
        <span className="ml-7">12349/3 kb</span>
      </div>
      <a
        href="#talkforex"
        className="absolute -top-[5px] left-3 flex items-center gap-[6px] font-['Open_Sans','Noto_Sans_CJK_SC',sans-serif] text-[13px] leading-[22px] font-bold whitespace-nowrap text-[#85827a] [text-shadow:0_0_2px_#fff]"
      >
        <span className="text-[19px] font-normal italic">韬客外汇</span>
        talkforex.com
      </a>
    </footer>
  );
}

export default function App() {
  return (
    <div className="min-h-screen overflow-hidden bg-[#ece9d8] font-['Liberation_Mono','Noto_Sans_CJK_SC',monospace] text-black">
      <TitleBar />
      <MenuBar />
      <Toolbar />
      <Chart />
      <ChartTabs />
      <Terminal />
      <StatusBar />
    </div>
  );
}
